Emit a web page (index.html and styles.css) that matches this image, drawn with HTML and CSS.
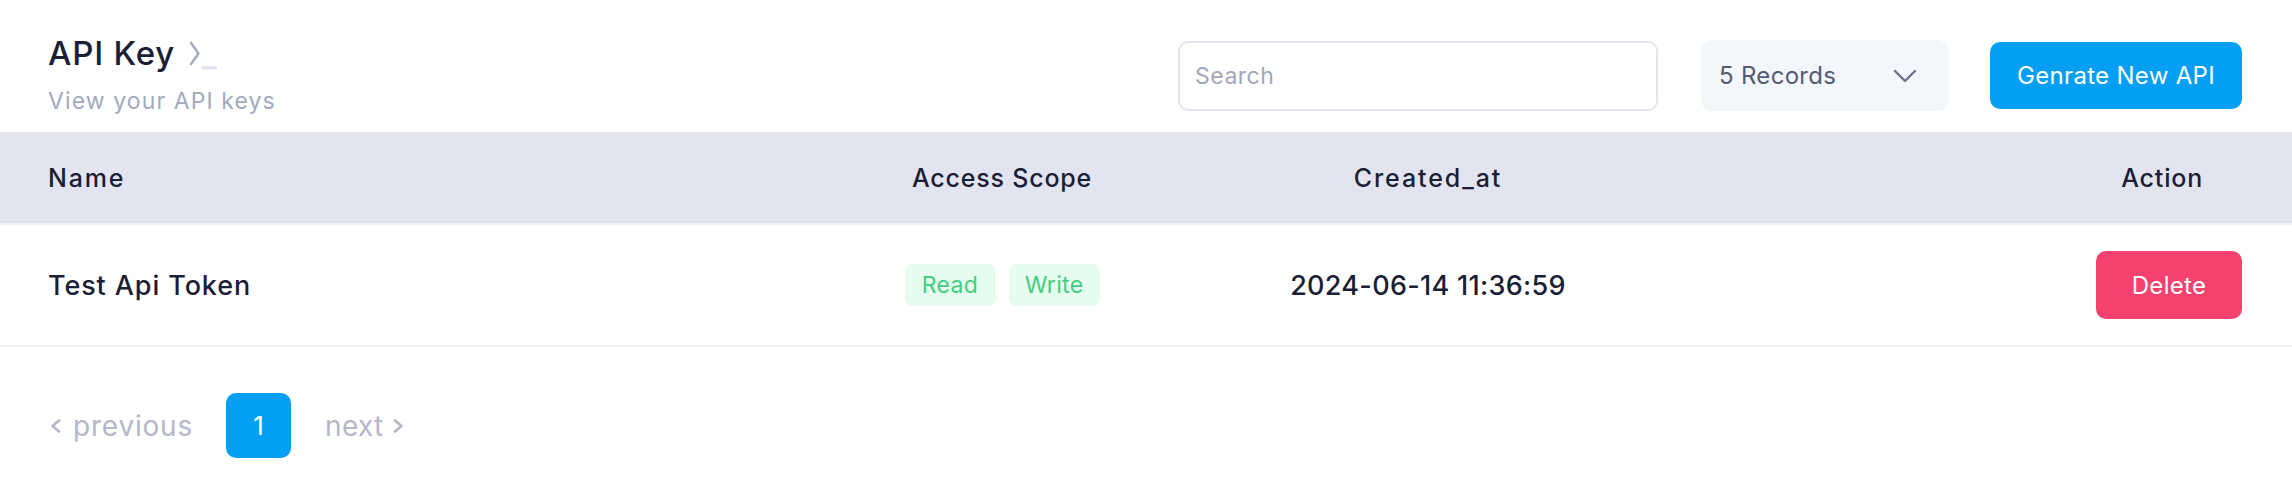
FILE: index.html
```html
<!DOCTYPE html>
<html lang="en">
<head>
<meta charset="utf-8">
<title>API Key</title>
<link rel="stylesheet" href="styles.css">
</head>
<body>
<div class="page">
  <header class="topbar">
    <div class="title-block">
      <h1 class="title">API Key
        <svg class="title-icon" width="30" height="30" viewBox="0 0 30 30" aria-hidden="true">
          <polyline points="3,3 10.5,13.5 3,24" fill="none" stroke="#a4a9bd" stroke-width="2.4" stroke-linecap="round" stroke-linejoin="round"/>
          <rect x="14" y="26" width="15" height="3.5" rx="1" fill="#e2e5ee"/>
        </svg>
      </h1>
      <p class="subtitle">View your API keys</p>
    </div>
    <div class="controls">
      <input class="search" type="text" placeholder="Search">
      <div class="select">
        <span>5 Records</span>
        <svg width="24" height="14" viewBox="0 0 24 14" aria-hidden="true">
          <polyline points="2,2 12,12 22,2" fill="none" stroke="#6d7189" stroke-width="2.4" stroke-linecap="round" stroke-linejoin="round"/>
        </svg>
      </div>
      <button class="btn btn-primary">Genrate New API</button>
    </div>
  </header>

  <div class="table">
    <div class="trow thead">
      <div class="cell c-name head-name">Name</div>
      <div class="cell c-scope">Access Scope</div>
      <div class="cell c-date head-date">Created_at</div>
      <div class="cell c-action action-head">Action</div>
    </div>
    <div class="trow tbody">
      <div class="cell c-name">Test Api Token</div>
      <div class="cell c-scope">
        <span class="badge">Read</span>
        <span class="badge">Write</span>
      </div>
      <div class="cell c-date date">2024-06-14 11:36:59</div>
      <div class="cell c-action"><button class="btn btn-danger">Delete</button></div>
    </div>
  </div>

  <nav class="pager">
    <span class="pager-link">
      <svg width="11" height="14" viewBox="0 0 11 14" aria-hidden="true"><polyline points="9,1.5 2.5,7 9,12.5" fill="none" stroke="#b5b6c8" stroke-width="2.6" stroke-linecap="round" stroke-linejoin="round"/></svg>
      previous
    </span>
    <span class="page-num">1</span>
    <span class="pager-link pager-next">
      next
      <svg width="11" height="14" viewBox="0 0 11 14" aria-hidden="true"><polyline points="2,1.5 8.5,7 2,12.5" fill="none" stroke="#b5b6c8" stroke-width="2.6" stroke-linecap="round" stroke-linejoin="round"/></svg>
    </span>
  </nav>
</div>
</body>
</html>
```
FILE: styles.css
```css
* { box-sizing: border-box; }

html, body {
  margin: 0;
  padding: 0;
  background: #ffffff;
}

body {
  font-family: Inter, "Open Sans", sans-serif;
  color: #1b1e34;
}

.page {
  width: 2292px;
  height: 496px;
  overflow: hidden;
  background: #fff;
}

/* ---------- top bar ---------- */
.topbar {
  height: 132px;
  padding: 0 50px 0 48px;
  display: flex;
  justify-content: space-between;
  align-items: flex-start;
}

.title-block {
  padding-top: 33px;
}

.title {
  margin: 0;
  font-size: 33px;
  line-height: 40px;
  font-weight: 500;
  color: #1b1e34;
  letter-spacing: 0.8px;
  display: flex;
  align-items: center;
  gap: 13px;
}

.title-icon {
  margin-top: 4px;
}

.subtitle {
  margin: 14px 0 0;
  font-size: 23px;
  line-height: 28px;
  color: #a3a9be;
  letter-spacing: 1.1px;
}

.controls {
  margin-top: 40px;
  height: 71px;
  display: flex;
  align-items: center;
}

.search {
  width: 480px;
  height: 70px;
  border: 2px solid #e3e6ef;
  border-radius: 10px;
  padding: 0 0 0 15px;
  font-family: inherit;
  font-size: 23px;
  color: #1b1e34;
  outline: none;
  background: #fff;
}

.search::placeholder {
  color: #a4a7bb;
  letter-spacing: 0.5px;
}

.select {
  margin-left: 43px;
  width: 248px;
  height: 71px;
  border-radius: 12px;
  background: #f3f6fa;
  padding: 0 32px 0 18px;
  display: flex;
  align-items: center;
  justify-content: space-between;
  font-size: 24px;
  color: #555b73;
  letter-spacing: 0.3px;
}

.btn {
  border: none;
  font-family: inherit;
  color: #fff;
  cursor: pointer;
}

.btn-primary {
  margin-left: 41px;
  width: 252px;
  height: 67px;
  border-radius: 10px;
  background: #049ff5;
  font-size: 24px;
  letter-spacing: 0.3px;
}

/* ---------- table ---------- */
.trow {
  display: grid;
  grid-template-columns: 756px 396px 456px 1fr;
  padding: 0 50px 0 48px;
  align-items: center;
}

.thead {
  height: 93px;
  background: #e2e5ef;
  border-bottom: 2px solid #eef1f6;
  font-size: 25px;
  font-weight: 500;
  color: #1b1e34;
  letter-spacing: 0.8px;
}

.head-name {
  letter-spacing: 1.8px;
}

.head-date {
  letter-spacing: 1.9px;
}

.tbody {
  height: 122px;
  border-bottom: 2px solid #eef1f6;
  font-size: 27px;
  font-weight: 500;
  color: #1b1e34;
  letter-spacing: 0.9px;
}

.date {
  letter-spacing: 0.3px;
}

.c-scope, .c-date {
  display: flex;
  justify-content: center;
  gap: 13px;
}

.c-action {
  display: flex;
  justify-content: flex-end;
}

.action-head {
  padding-right: 39px;
}

.badge {
  width: 91px;
  height: 42px;
  border-radius: 8px;
  background: #e5fcee;
  color: #44cd80;
  font-size: 23px;
  font-weight: 400;
  display: flex;
  align-items: center;
  justify-content: center;
  letter-spacing: 0.3px;
}

.btn-danger {
  width: 146px;
  height: 68px;
  border-radius: 10px;
  background: #f4416e;
  font-size: 24px;
  letter-spacing: 0.3px;
}

/* ---------- pager ---------- */
.pager {
  padding: 46px 0 0 50px;
  display: flex;
  height: 149px;
  align-items: flex-start;
}

.pager-link {
  height: 65px;
  display: flex;
  align-items: center;
  gap: 12px;
  font-size: 28px;
  color: #b5b6c8;
  letter-spacing: 0.8px;
}

.pager-next {
  gap: 10px;
  letter-spacing: 0.3px;
}

.page-num {
  margin: 0 34px 0 33px;
  width: 65px;
  height: 65px;
  border-radius: 10px;
  background: #049ff5;
  color: #fff;
  font-size: 26px;
  display: flex;
  align-items: center;
  justify-content: center;
}
```
